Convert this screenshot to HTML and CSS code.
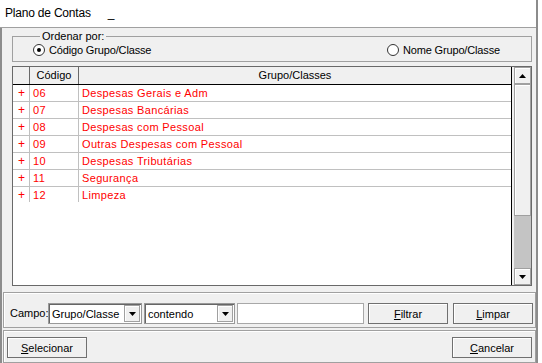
FILE: index.html
```html
<!DOCTYPE html>
<html lang="pt-BR">
<head>
    <meta charset="UTF-8">
    <title>Plano de Contas</title>
    <link rel="stylesheet" href="styles.css">
</head>
<body>
    <div class="window">
        <div class="titlebar">Plano de Contas<span class="caret">_</span></div>

        <div class="client">
            <div class="top">
                <fieldset class="group">
                    <legend>Ordenar por:</legend>
                    <div class="radios">
                        <label class="radio"><span class="dot checked"></span>Código Grupo/Classe</label>
                        <label class="radio"><span class="dot"></span>Nome Grupo/Classe</label>
                    </div>
                </fieldset>

                <div class="grid">
                    <div class="data">
                        <div class="head">
                            <div class="hcell"></div>
                            <div class="hcell">Código</div>
                            <div class="hcell name">Grupo/Classes</div>
                        </div>
                        <div class="row"><div class="cell plus">+</div><div class="cell">06</div><div class="cell">Despesas Gerais e Adm</div></div>
                        <div class="row"><div class="cell plus">+</div><div class="cell">07</div><div class="cell">Despesas Bancárias</div></div>
                        <div class="row"><div class="cell plus">+</div><div class="cell">08</div><div class="cell">Despesas com Pessoal</div></div>
                        <div class="row"><div class="cell plus">+</div><div class="cell">09</div><div class="cell">Outras Despesas com Pessoal</div></div>
                        <div class="row"><div class="cell plus">+</div><div class="cell">10</div><div class="cell">Despesas Tributárias</div></div>
                        <div class="row"><div class="cell plus">+</div><div class="cell">11</div><div class="cell">Segurança</div></div>
                        <div class="row last"><div class="cell plus">+</div><div class="cell">12</div><div class="cell">Limpeza</div></div>
                    </div>
                    <div class="scrollbar">
                        <div class="sbtn">
                            <svg width="7" height="4" viewBox="0 0 7 4"><path d="M3.5 0 L7 4 L0 4 Z" fill="#000"/></svg>
                        </div>
                        <div class="thumb"></div>
                        <div class="track"></div>
                        <div class="sbtn">
                            <svg width="7" height="4" viewBox="0 0 7 4"><path d="M0 0 L7 0 L3.5 4 Z" fill="#000"/></svg>
                        </div>
                    </div>
                </div>
            </div>

            <div class="panel filter">
                <span class="label">Campo:</span>
                <div class="combo c1"><span class="ctext">Grupo/Classe</span><span class="drop"><svg width="7" height="4" viewBox="0 0 7 4"><path d="M0 0 L7 0 L3.5 4 Z" fill="#000"/></svg></span></div>
                <div class="combo c2"><span class="ctext">contendo</span><span class="drop"><svg width="7" height="4" viewBox="0 0 7 4"><path d="M0 0 L7 0 L3.5 4 Z" fill="#000"/></svg></span></div>
                <div class="edit"></div>
                <button class="btn filtrar"><u>F</u>iltrar</button>
                <button class="btn limpar"><u>L</u>impar</button>
            </div>

            <div class="panel actions">
                <button class="btn"><u>S</u>elecionar</button>
                <button class="btn"><u>C</u>ancelar</button>
            </div>
        </div>
    </div>
</body>
</html>
```

FILE: styles.css
```css
body {
    margin: 0;
    background: #ffffff;
    font-family: "Liberation Sans", Arial, sans-serif;
    font-size: 11px;
    color: #000;
}
.window {
    width: 538px;
    height: 363px;
    display: flex;
    flex-direction: column;
    border-right: 2px solid #8c8c8c;
    box-sizing: border-box;
    overflow: hidden;
}
.titlebar {
    height: 27px;
    line-height: 27px;
    padding-left: 5px;
    background: #fff;
    border-bottom: 1px solid #a0a0a0;
    font-size: 12px;
    letter-spacing: -0.2px;
}
.caret { margin-left: 17px; }
.client {
    flex: 1;
    display: flex;
    flex-direction: column;
    background: #f0f0f0;
    border-left: 2px solid #8c8c8c;
}
.top { padding: 0 4px 6px 10px; }

/* group box */
.group {
    margin: 2px 0 0;
    padding: 0 31px 4px 20px;
    border: 1px solid #a0a0a0;
}
.group legend {
    margin-left: 7px;
    padding: 0 2px;
    line-height: 13px;
}
.radios {
    display: flex;
    justify-content: space-between;
    height: 14px;
    align-items: center;
}
.radio { display: flex; align-items: center; letter-spacing: -0.15px; }
.dot {
    width: 10px;
    height: 10px;
    border: 1.5px solid #333;
    border-radius: 50%;
    background: #fff;
    margin-right: 4px;
    display: flex;
    align-items: center;
    justify-content: center;
}
.dot.checked::after {
    content: "";
    width: 4px;
    height: 4px;
    border-radius: 50%;
    background: #000;
}

/* grid */
.grid {
    margin-top: 4px;
    height: 220px;
    box-sizing: border-box;
    border: 1px solid #696969;
    display: flex;
    background: #fff;
}
.data {
    flex: 1;
    border-right: 1px solid #000;
}
.head, .row {
    display: grid;
    grid-template-columns: 17px 49px 1fr;
}
.head {
    height: 18px;
    background: #f0f0f0;
    border-bottom: 1px solid #000;
    box-sizing: border-box;
}
.hcell {
    border-right: 1px solid #696969;
    line-height: 17px;
    text-align: center;
}
.hcell.name { border-right: 0; }
.row {
    height: 17px;
    box-sizing: border-box;
    border-bottom: 1px solid #c0c0c0;
    color: #ff0000;
    letter-spacing: 0.35px;
}
.row.last { height: 15px; border-bottom: 0; overflow: hidden; }
.cell {
    padding-left: 3px;
    line-height: 16px;
    border-right: 1px solid #c0c0c0;
}
.cell:last-child { border-right: 0; }
.cell.plus { padding-left: 5px; font-size: 12px; }

.scrollbar {
    width: 19px;
    display: flex;
    flex-direction: column;
    background: #f0f0f0;
    padding-left: 2px;
    box-sizing: border-box;
}
.sbtn {
    height: 17px;
    box-sizing: border-box;
    border: 1px solid #a0a0a0;
    box-shadow: inset 1px 1px #fff;
    display: flex;
    align-items: center;
    justify-content: center;
}
.thumb {
    height: 132px;
    box-sizing: border-box;
    border: 1px solid #a0a0a0;
    box-shadow: inset 1px 1px #fff;
}
.track { flex: 1; background: #c4c4c4; }

/* panels */
.panel {
    margin-left: 1px;
    border: 1px solid #a0a0a0;
    box-shadow: inset 1px 1px #fff;
    display: flex;
    align-items: flex-start;
}
.filter {
    height: 36px;
    box-sizing: border-box;
    padding: 10px 0 0 6px;
}
.actions {
    flex: 1;
    margin-top: 2px;
    padding: 6px 3px 0 3px;
    justify-content: space-between;
}
.label { width: 38px; line-height: 21px; }
.combo, .edit {
    height: 21px;
    box-sizing: border-box;
    background: #fff;
    border: 1px solid #999;
    box-shadow: inset 1px 1px #666;
    display: flex;
    align-items: center;
}
.c1 { width: 94px; }
.c2 { width: 91px; margin-left: 2px; }
.edit { width: 127px; margin-left: 2px; box-shadow: none; border-color: #a8a8a8; }
.ctext { flex: 1; padding-left: 3px; }
.drop {
    width: 16px;
    height: 17px;
    margin-right: 1px;
    box-sizing: border-box;
    background: #f0f0f0;
    border: 1px solid #a0a0a0;
    box-shadow: inset 1px 1px #fff;
    display: flex;
    align-items: center;
    justify-content: center;
}
.btn {
    width: 80px;
    height: 21px;
    padding: 0;
    font-family: inherit;
    font-size: 11px;
    color: #000;
    background: #f0f0f0;
    border: 1px solid #707070;
    box-shadow: inset 1px 1px #fff;
    border-radius: 0;
}
.filtrar { margin-left: 4px; }
.limpar { margin-left: 5px; }
```
